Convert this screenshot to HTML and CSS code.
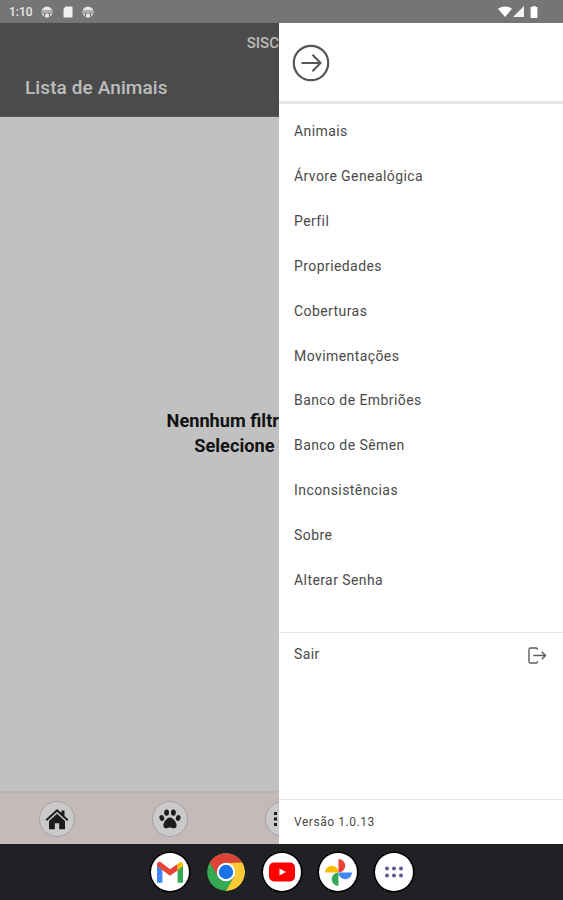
FILE: index.html
```html
<!DOCTYPE html>
<html lang="en">
<head>
    <meta charset="UTF-8">
    <meta name="viewport" content="width=device-width, initial-scale=1.0">
    <title>Lista de Animais</title>
    <link rel="stylesheet" href="styles.css">
</head>
<body>
    <div class="screen">
        <div class="status-bar">
            <div class="status-left">
                <span class="clock">1:10</span>
                <svg class="status-icon" viewBox="0 0 12 12"><circle cx="6" cy="6" r="5.5" fill="#e6e6e6"/><path d="M1 5h10M1 7h10M4 7l-1 4M8 7l1 4" stroke="#757575" stroke-width="1.2" fill="none"/></svg>
                <svg class="status-icon" viewBox="0 0 12 12"><path d="M3.5 0.5H10.5V11.5H1.5V3z" fill="#f0f0f0"/></svg>
                <svg class="status-icon" viewBox="0 0 12 12"><circle cx="6" cy="6" r="5.5" fill="#e6e6e6"/><path d="M1 5h10M1 7h10M4 7l-1 4M8 7l1 4" stroke="#757575" stroke-width="1.2" fill="none"/></svg>
            </div>
            <div class="status-right">
                <svg class="wifi" viewBox="0 0 14 11"><path d="M0 2.8Q7 -2 14 2.8L7 11z" fill="#fff"/></svg>
                <svg class="signal" viewBox="0 0 11 11"><path d="M11 0V11H0z" fill="#f2f2f2"/></svg>
                <svg class="battery" viewBox="0 0 8 12"><path d="M2.6 0H5.4V1H7.4V12H0.6V1H2.6z" fill="#fff"/></svg>
            </div>
        </div>

        <div class="app">
            <div class="page">
                <header class="app-header">
                    <div class="app-name">SISC</div>
                    <h1>Lista de Animais</h1>
                </header>

                <main class="app-content">
                    <p>Nennhum filtr<br>Selecione&nbsp;</p>
                </main>

                <nav class="bottom-bar">
                    <div class="tab">
                        <svg viewBox="0 0 24 24" fill="#1c1c1c"><path d="M12 2 .6 12.4l1.300 1.500L12 4.800l10.100 9.100 1.300-1.500-3.900-3.500V3.500h-3v2.400z"/><path d="M12 6.800 4 14v8.200h5.800v-6h4.400v6H20V14z"/></svg>
                    </div>
                    <div class="tab">
                        <svg viewBox="0 0 24 24" fill="#1c1c1c"><ellipse cx="8.600" cy="5.600" rx="2.400" ry="3.200"/><ellipse cx="15.400" cy="5.600" rx="2.400" ry="3.200"/><ellipse cx="3.800" cy="11" rx="2.300" ry="3" transform="rotate(-18 3.800 11)"/><ellipse cx="20.200" cy="11" rx="2.300" ry="3" transform="rotate(18 20.200 11)"/><path d="M12 10.500c3 0 6.600 4.600 6.600 8 0 2.600-2.400 3-3.400 2.800-1.200-.2-2-.8-3.200-.8s-2 .6-3.200.8c-1 .2-3.400-.2-3.400-2.800 0-3.400 3.600-8 6.600-8z"/></svg>
                    </div>
                    <div class="tab">
                        <svg viewBox="0 0 24 24" fill="#1c1c1c"><path d="M3 5h3v3H3zM3 10.500h3v3H3zM3 16h3v3H3zM8 5h13v3H8zM8 10.500h13v3H8zM8 16h13v3H8z"/></svg>
                    </div>
                </nav>
            </div>

            <aside class="drawer">
                <div class="drawer-top">
                    <svg class="close-icon" viewBox="0 0 38 38" fill="none" stroke="#555" stroke-width="2.200"><circle cx="19" cy="19" r="17.200"/><path d="M9.500 19H28M20.500 10.800 28.500 19 20.500 27.200" stroke-width="2"/></svg>
                </div>
                <ul class="menu">
                    <li>Animais</li>
                    <li>Árvore Genealógica</li>
                    <li>Perfil</li>
                    <li>Propriedades</li>
                    <li>Coberturas</li>
                    <li>Movimentações</li>
                    <li>Banco de Embriões</li>
                    <li>Banco de Sêmen</li>
                    <li>Inconsistências</li>
                    <li>Sobre</li>
                    <li>Alterar Senha</li>
                </ul>
                <div class="logout">
                    <span>Sair</span>
                    <svg viewBox="0 0 20 18" fill="none" stroke="#5f5f5f" stroke-width="1.500"><path d="M10 3V2.400Q10 1 8.600 1H2.600Q1 1 1 2.600V15.400Q1 17 2.600 17H8.600Q10 17 10 15.600V15"/><path d="M5.500 9H18.500M14.500 5 18.500 9 14.500 13"/></svg>
                </div>
                <div class="version">Versão 1.0.13</div>
            </aside>
        </div>

        <div class="nav-bar">
            <div class="dock-icon">
                <svg viewBox="0 0 24 20" width="26" height="22"><path d="M0 3v17h5V7z" fill="#4285f4"/><path d="M19 7v13h5V3z" fill="#34a853"/><path d="M0 3.500Q0 0 3 0.500L12 7.500 19 2.500V8.500L12 13.500 0 4.500z" fill="#ea4335"/><path d="M19 2.500 21 1Q24 0 24 3.500V4.500L19 8.500z" fill="#fbbc04"/></svg>
            </div>
            <div class="dock-icon chrome">
                <svg viewBox="0 0 38 38" width="38" height="38"><circle cx="19" cy="19" r="19" fill="#34a853"/><path d="M19 10H35.450A19 19 0 0 0 2.550 9.500L11.200 23.500z" fill="#db4437"/><path d="M35.450 9.500A19 19 0 0 1 19 38L27 24 19 10z" fill="#fcc934"/><circle cx="19" cy="19" r="9.200" fill="#fff"/><circle cx="19" cy="19" r="7.200" fill="#1a73e8"/></svg>
            </div>
            <div class="dock-icon">
                <svg viewBox="0 0 26 20" width="26" height="20"><rect width="26" height="19" y="0.500" rx="5" fill="#f00"/><path d="M10.500 6.500 17 10l-6.500 3.500z" fill="#fff"/></svg>
            </div>
            <div class="dock-icon">
                <svg viewBox="0 0 26 26" width="27" height="27"><path d="M13 13H0A6.500 6.500 0 0 1 13 13z" fill="#fbbc04"/><path d="M13 13V0A6.500 6.500 0 0 1 13 13z" fill="#ea4335"/><path d="M13 13H26A6.500 6.500 0 0 1 13 13z" fill="#4285f4"/><path d="M13 13V26A6.500 6.500 0 0 1 13 13z" fill="#34a853"/></svg>
            </div>
            <div class="dock-icon">
                <svg viewBox="0 0 20 14" width="20" height="14" fill="#5c5a8e"><circle cx="3" cy="3.500" r="2"/><circle cx="10" cy="3.500" r="2"/><circle cx="17" cy="3.500" r="2"/><circle cx="3" cy="10.500" r="2"/><circle cx="10" cy="10.500" r="2"/><circle cx="17" cy="10.500" r="2"/></svg>
            </div>
        </div>
    </div>
</body>
</html>
```
FILE: styles.css
```css
* {
    box-sizing: border-box;
}

body {
    margin: 0;
    font-family: Roboto, 'Liberation Sans', sans-serif;
}

.screen {
    width: 563px;
    height: 900px;
    display: flex;
    flex-direction: column;
    overflow: hidden;
}

.status-bar {
    height: 23px;
    background: #757575;
    display: flex;
    justify-content: space-between;
    align-items: center;
    padding: 0 25px 0 9px;
    flex-shrink: 0;
}

.status-left {
    display: flex;
    align-items: center;
    gap: 8.500px;
    color: #e8e8e8;
    font-size: 12px;
    font-weight: 500;
}

.status-icon {
    width: 12px;
    height: 12px;
}

.status-right {
    display: flex;
    align-items: center;
}

.wifi {
    width: 14px;
    height: 11px;
}

.signal {
    width: 11px;
    height: 11px;
    margin: 0 6px 0 1px;
}

.battery {
    width: 8px;
    height: 12px;
}

.app {
    flex: 1;
    display: flex;
    min-height: 0;
}

.page {
    width: 279px;
    display: flex;
    flex-direction: column;
    overflow: hidden;
    flex-shrink: 0;
}

.app-header {
    height: 94px;
    background: #4b4b4b;
    border-bottom: 1px solid #5a5a5a;
    color: #bdbdbd;
    padding-top: 13px;
    flex-shrink: 0;
}

.app-name {
    text-align: right;
    font-size: 15px;
    font-weight: 500;
    line-height: 14px;
}

.app-header h1 {
    margin: 26px 0 0 25px;
    font-size: 19px;
    font-weight: 500;
    line-height: 24px;
    letter-spacing: 0.1px;
}

.app-content {
    flex: 1;
    background: #c1c1c1;
    display: flex;
    align-items: center;
    justify-content: flex-end;
}

.app-content p {
    margin: 0 0 43px;
    text-align: right;
    font-size: 18.200px;
    font-weight: 700;
    line-height: 25px;
    color: #111;
}

.bottom-bar {
    height: 53px;
    background: #c4baba;
    border-top: 2px solid #b9b4b4;
    display: flex;
    padding-left: 39px;
    gap: 77px;
    align-items: center;
    flex-shrink: 0;
}

.tab {
    width: 36px;
    height: 36px;
    border-radius: 50%;
    background: #cbc9c9;
    border: 1px solid #a5a0a0;
    display: flex;
    align-items: center;
    justify-content: center;
    flex-shrink: 0;
}

.tab svg {
    width: 24px;
    height: 24px;
}

.drawer {
    width: 284px;
    background: #fff;
    display: flex;
    flex-direction: column;
}

.drawer-top {
    height: 81px;
    border-bottom: 3px solid #e6e6e6;
    padding: 21px 0 0 13px;
    flex-shrink: 0;
}

.close-icon {
    display: block;
    width: 38px;
    height: 38px;
}

.menu {
    list-style: none;
    margin: 0;
    padding: 5.100px 0 0;
    height: 529px;
    border-bottom: 1px solid #e6e6e6;
    flex-shrink: 0;
}

.menu li {
    height: 44.900px;
    line-height: 44.900px;
    padding-left: 15px;
    font-size: 14px;
    letter-spacing: 0.420px;
    color: #4a4a4a;
}

.logout {
    flex: 1;
    display: flex;
    justify-content: space-between;
    align-items: flex-start;
    padding: 12px 16px 0 15px;
    font-size: 14px;
    letter-spacing: 0.420px;
    color: #4a4a4a;
    line-height: 18px;
}

.logout svg {
    width: 19px;
    height: 17px;
    margin-top: 2px;
}

.version {
    height: 45px;
    border-top: 1px solid #e6e6e6;
    padding-left: 15px;
    line-height: 44px;
    font-size: 12px;
    letter-spacing: 0.550px;
    color: #4a4a4a;
    flex-shrink: 0;
}

.nav-bar {
    height: 56px;
    background: #202124;
    display: flex;
    align-items: center;
    justify-content: center;
    gap: 18px;
    padding-left: 1px;
    flex-shrink: 0;
}

.dock-icon {
    width: 38px;
    height: 38px;
    border-radius: 50%;
    background: #fff;
    box-shadow: 0 0 0 1.500px #000;
    display: flex;
    align-items: center;
    justify-content: center;
    overflow: hidden;
}

.chrome {
    background: none;
    box-shadow: none;
}
```
